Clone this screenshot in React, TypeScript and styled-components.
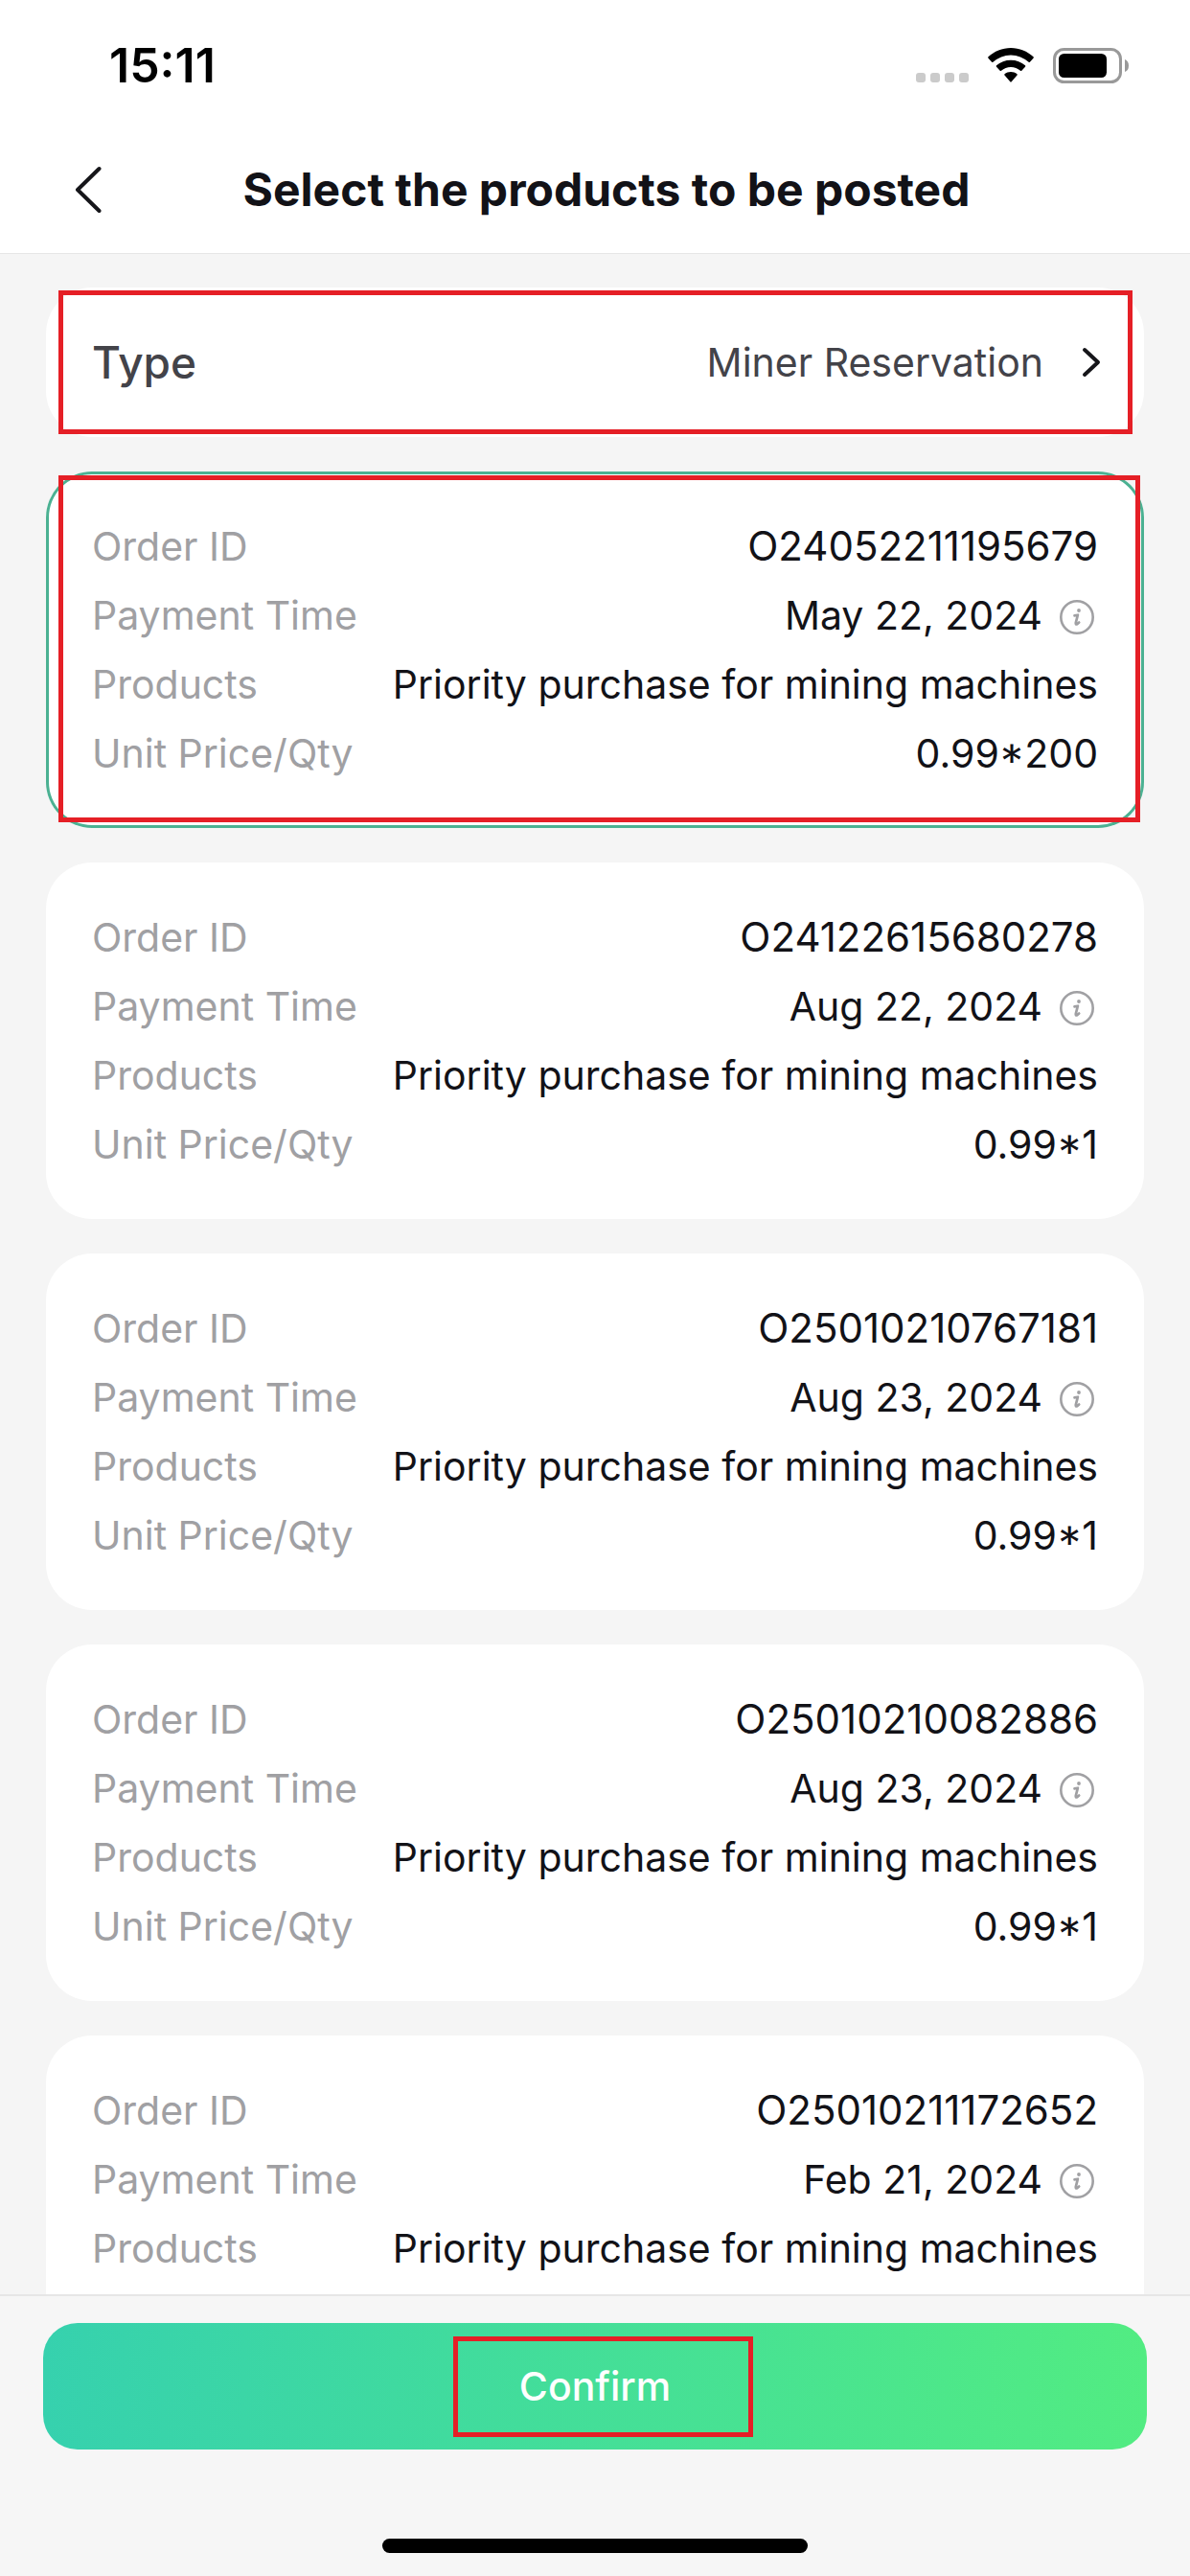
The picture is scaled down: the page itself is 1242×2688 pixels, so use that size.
import React, { useState } from "react";
import styled, { createGlobalStyle } from "styled-components";

const GlobalStyle = createGlobalStyle`
  *, *::before, *::after { box-sizing: border-box; }
  html, body, #root { height: 100%; }
  body {
    margin: 0;
    background: #f5f5f5;
    color: #121217;
    font-family: Inter, "Liberation Sans", sans-serif;
    font-size: 41px;
  }
  button { font: inherit; color: inherit; border: 0; background: none; padding: 0; cursor: pointer; }
`;

const Screen = styled.div`
  display: flex;
  flex-direction: column;
  height: 100vh;
  overflow: hidden;
`;

const TopArea = styled.header`
  flex: none;
  background: #fff;
  border-bottom: 1px solid #e6e6e6;
`;

const StatusBar = styled.div`
  display: flex;
  align-items: center;
  justify-content: space-between;
  height: 132px;
  padding: 4px 64px 0 114px;
`;

const Clock = styled.time`
  font-size: 50px;
  line-height: 60px;
  font-weight: 600;
  color: #000;
`;

const StatusIcons = styled.div`
  display: flex;
  align-items: center;
  gap: 20px;
`;

const TitleBar = styled.div`
  display: flex;
  align-items: center;
  height: 132px;
  padding: 0 48px;
`;

const BackButton = styled.button`
  display: flex;
  align-items: center;
  justify-content: center;
  width: 88px;
  height: 96px;
`;

const Title = styled.h1`
  flex: 1;
  margin: 0;
  padding-right: 64px;
  text-align: center;
  font-size: 48px;
  line-height: 60px;
  font-weight: 700;
`;

const List = styled.main`
  flex: 1;
  min-height: 0;
  overflow-y: auto;
  scrollbar-width: none;
  display: flex;
  flex-direction: column;
  gap: 36px;
  padding: 35px 48px 36px;
`;

const TypeButton = styled.button`
  position: relative;
  flex: none;
  display: flex;
  align-items: center;
  justify-content: space-between;
  height: 156px;
  padding: 0 45px 0 48px;
  border-radius: 48px;
  background: #fff;
  color: #434349;
`;

const TypeLabel = styled.span`
  font-size: 46px;
  line-height: 60px;
  font-weight: 500;
`;

const TypeValue = styled.span`
  display: flex;
  align-items: center;
  gap: 40px;
  line-height: 60px;
`;

const OrderCard = styled.label<{ $selected: boolean }>`
  position: relative;
  flex: none;
  display: block;
  padding: 42px 48px;
  border-radius: 48px;
  background: #fff;
  box-shadow: ${(p) => (p.$selected ? "inset 0 0 0 3px #4bb192" : "none")};
  cursor: pointer;
`;

const HiddenRadio = styled.input`
  position: absolute;
  opacity: 0;
  width: 1px;
  height: 1px;
  margin: 0;
`;

const Row = styled.span`
  display: flex;
  align-items: center;
  justify-content: space-between;
  line-height: 72px;
`;

const RowLabel = styled.span`
  color: #a0a0a3;
`;

const RowValue = styled.span`
  display: flex;
  align-items: center;
  gap: 16px;
`;

const OrderNumber = styled(RowValue)`
  font-size: 42px;
`;

const InfoButton = styled.button`
  display: flex;
  padding: 4px 4px 0 2px;
`;

const Footer = styled.footer`
  flex: none;
  display: flex;
  flex-direction: column;
  align-items: center;
  padding: 28px 45px 24px;
  border-top: 2px solid #e6e6e6;
  background: #f6f6f6;
`;

const ConfirmButton = styled.button`
  position: relative;
  width: 100%;
  height: 132px;
  margin-bottom: 93px;
  border-radius: 36px;
  background: linear-gradient(90deg, #36d1ae, #52ec82);
  color: #fff;
  font-weight: 500;
`;

const HomeIndicator = styled.div`
  width: 444px;
  height: 15px;
  border-radius: 8px;
  background: #000;
`;

const Highlight = styled.span<{ $inset: string }>`
  position: absolute;
  inset: ${(p) => p.$inset};
  border: 5px solid #e51f26;
  pointer-events: none;
`;

const SignalDots = () => (
  <svg width="55" height="36" viewBox="0 0 55 36" aria-hidden="true">
    {[0, 15, 30, 45].map((x) => (
      <rect key={x} x={x} y="26" width="10" height="10" rx="3" fill="#cbcbcb" />
    ))}
  </svg>
);

const WifiIcon = () => (
  <svg width="48" height="36" viewBox="0 0 48 36" aria-hidden="true">
    <path d="M24 0C33 0 41.300 3.500 47.500 9.300Q48.200 10 47.500 10.700L43.900 14.800Q43.300 15.400 42.600 14.800A27.300 27.300 0 0 0 5.400 14.800Q4.700 15.400 4.100 14.800L.5 10.700Q-.2 10 .5 9.300C6.700 3.500 15 0 24 0Z" />
    <path d="M24 12.700C29.700 12.700 35 14.700 39 18.300Q39.700 19 39 19.700L35.300 23.800Q34.700 24.400 34 23.800A15.100 15.100 0 0 0 14 23.800Q13.300 24.400 12.700 23.800L9 19.700Q8.300 19 9 18.300C13 14.700 18.300 12.700 24 12.700Z" />
    <path d="M24 25C26.500 25 28.700 25.900 30.500 27.200Q31.200 27.900 30.500 28.600L24.700 35.300Q24 36 23.300 35.300L17.500 28.600Q16.800 27.900 17.500 27.200C19.300 25.900 21.500 25 24 25Z" />
  </svg>
);

const BatteryIcon = () => (
  <svg width="79" height="37" viewBox="0 0 79 37" aria-hidden="true">
    <rect x="1.500" y="1.500" width="69" height="34" rx="10" fill="none" stroke="#999" strokeWidth="3" />
    <rect x="6" y="6" width="50" height="25" rx="5.500" />
    <path d="M75 12V25Q79 23.500 79 18.500Q79 13.500 75 12Z" fill="#999" />
  </svg>
);

const BackIcon = () => (
  <svg width="28" height="50" viewBox="0 0 28 50" aria-hidden="true">
    <path d="M25.500 3L3 25L25.500 47" fill="none" stroke="#16161a" strokeWidth="4" strokeLinecap="round" strokeLinejoin="round" />
  </svg>
);

const ForwardIcon = () => (
  <svg width="20" height="32" viewBox="0 0 20 32" aria-hidden="true">
    <path d="M3 3L17 16L3 29" fill="none" stroke="#16161a" strokeWidth="4" strokeLinecap="round" strokeLinejoin="round" />
  </svg>
);

const InfoIcon = () => (
  <svg width="36" height="36" viewBox="0 0 36 36" aria-hidden="true">
    <circle cx="18" cy="18" r="16.700" fill="none" stroke="#a0a0a3" strokeWidth="2.600" />
    <circle cx="20" cy="11" r="1.900" fill="#a0a0a3" />
    <path d="M15.500 16.400L18.900 15.700L16.800 23.800Q16.400 26 18.200 25.200L20.200 23.500" fill="none" stroke="#a0a0a3" strokeWidth="2.700" strokeLinecap="round" strokeLinejoin="round" />
  </svg>
);

interface Order {
  id: string;
  date: string;
  product: string;
  price: string;
}

const product = "Priority purchase for mining machines";

const orders: Order[] = [
  { id: "O24052211195679", date: "May 22, 2024", product, price: "0.99*200" },
  { id: "O24122615680278", date: "Aug 22, 2024", product, price: "0.99*1" },
  { id: "O25010210767181", date: "Aug 23, 2024", product, price: "0.99*1" },
  { id: "O25010210082886", date: "Aug 23, 2024", product, price: "0.99*1" },
  { id: "O25010211172652", date: "Feb 21, 2024", product, price: "0.99*1" },
];

export default function App() {
  const [selected, setSelected] = useState(orders[0].id);
  return (
    <>
      <GlobalStyle />
      <Screen>
        <TopArea>
          <StatusBar>
            <Clock>15:11</Clock>
            <StatusIcons>
              <SignalDots />
              <WifiIcon />
              <BatteryIcon />
            </StatusIcons>
          </StatusBar>
          <TitleBar>
            <BackButton aria-label="Back">
              <BackIcon />
            </BackButton>
            <Title>Select the products to be posted</Title>
          </TitleBar>
        </TopArea>
        <List>
          <TypeButton>
            <TypeLabel>Type</TypeLabel>
            <TypeValue>
              Miner Reservation
              <ForwardIcon />
            </TypeValue>
            <Highlight $inset="3px 12px 3px 13px" />
          </TypeButton>
          {orders.map((order, index) => (
            <OrderCard key={order.id} $selected={order.id === selected}>
              <HiddenRadio
                type="radio"
                name="order"
                checked={order.id === selected}
                onChange={() => setSelected(order.id)}
              />
              <Row>
                <RowLabel>Order ID</RowLabel>
                <OrderNumber>{order.id}</OrderNumber>
              </Row>
              <Row>
                <RowLabel>Payment Time</RowLabel>
                <RowValue>
                  {order.date}
                  <InfoButton type="button" aria-label="Payment details">
                    <InfoIcon />
                  </InfoButton>
                </RowValue>
              </Row>
              <Row>
                <RowLabel>Products</RowLabel>
                <RowValue>{order.product}</RowValue>
              </Row>
              <Row>
                <RowLabel>Unit Price/Qty</RowLabel>
                <RowValue>{order.price}</RowValue>
              </Row>
              {index === 0 && <Highlight $inset="4px 4px 6px 13px" />}
            </OrderCard>
          ))}
        </List>
        <Footer>
          <ConfirmButton>
            Confirm
            <Highlight $inset="14px 411px 13px 428px" />
          </ConfirmButton>
          <HomeIndicator />
        </Footer>
      </Screen>
    </>
  );
}
